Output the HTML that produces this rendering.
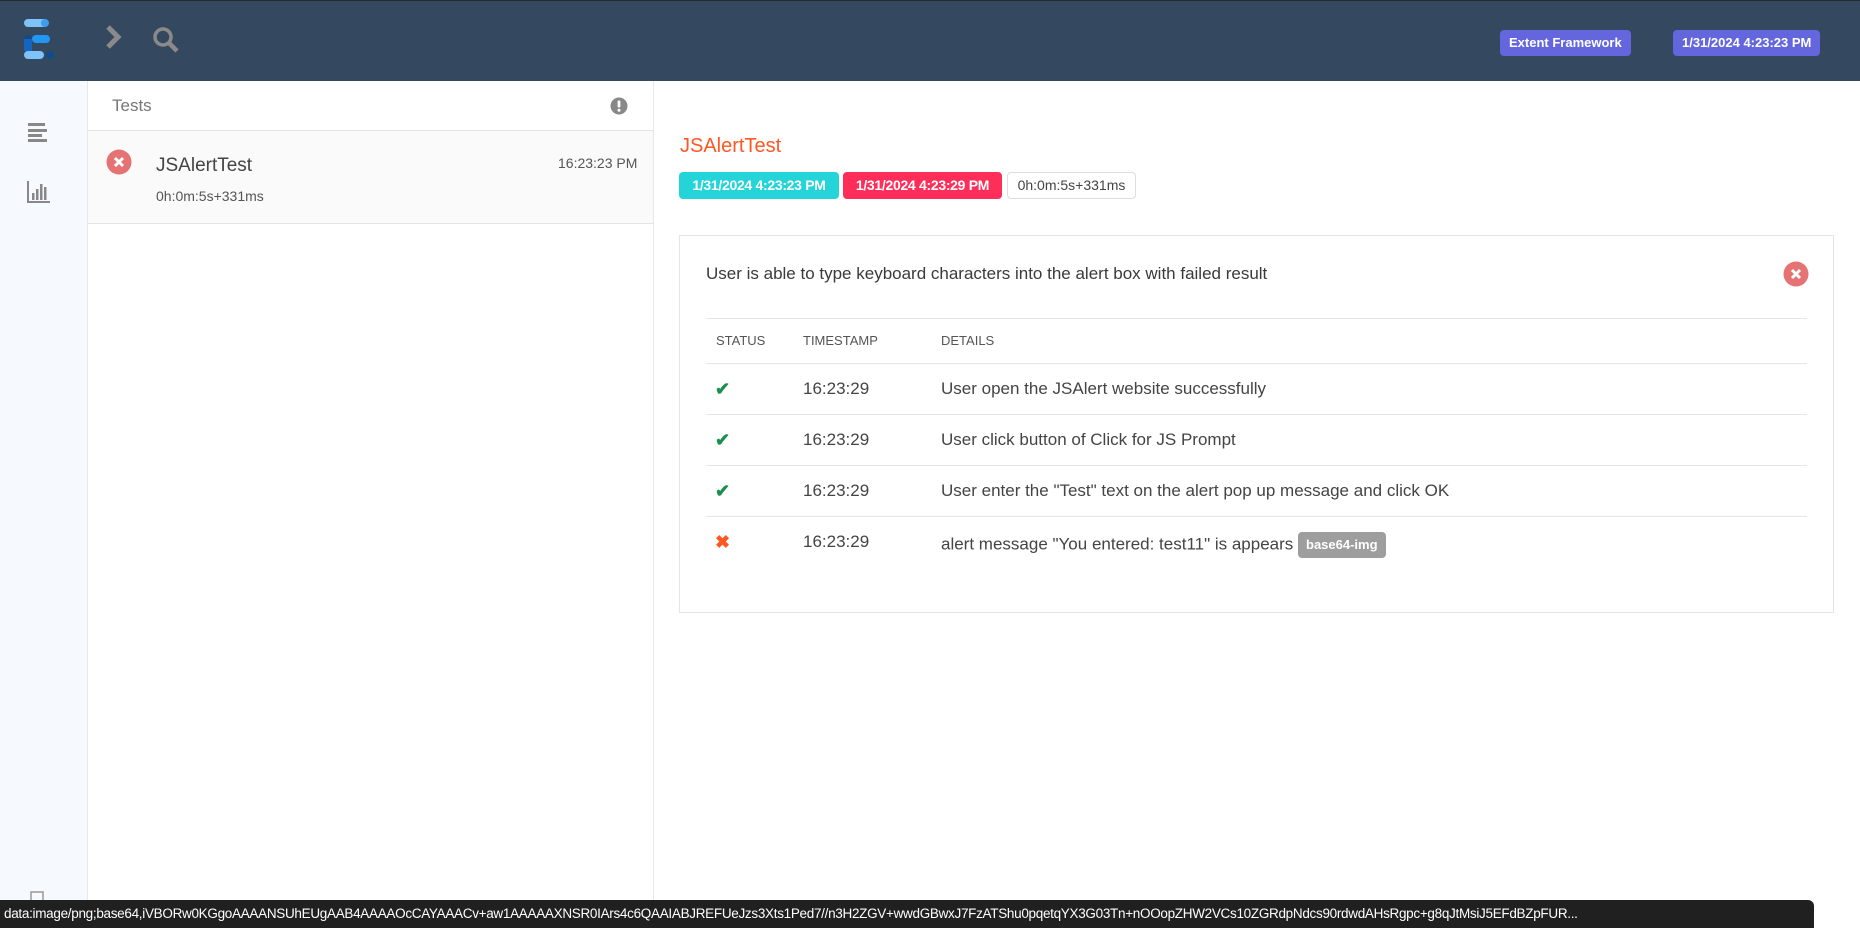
<!DOCTYPE html>
<html><head><meta charset="utf-8"><style>
*{box-sizing:border-box;margin:0;padding:0}
body{width:1860px;height:928px;overflow:hidden;font-family:"Liberation Sans",sans-serif;background:#fff;position:relative;color:#333}
.top{position:absolute;left:0;top:0;width:1860px;height:81px;background:#344960;border-top:1px solid #2a2a2a}
.hb{position:absolute;top:29px;height:26px;background:#6366dc;color:#fff;font-weight:bold;font-size:13px;line-height:26px;border-radius:4px;padding:0 9px}
.side{position:absolute;left:0;top:81px;width:88px;height:847px;background:#f6f9fe;border-right:1px solid #e6e9ee}
.list{position:absolute;left:88px;top:81px;width:566px;height:847px;border-right:1px solid #e8e8e8;background:#fff}
.abs{position:absolute}
.badge{position:absolute;top:172px;height:27px;line-height:27px;font-size:14px;font-weight:bold;color:#fff;border-radius:4px;text-align:center;letter-spacing:-0.3px}
.card{position:absolute;left:679px;top:235px;width:1155px;height:378px;border:1px solid #e4e4e4}
.hl{position:absolute;left:26px;width:1101px;height:1px;background:#e6e6e6}
.cell{position:absolute;font-size:17px;color:#444}
.h{font-size:13px;color:#555}
.ck{color:#1e8e4e;font-size:18px;font-weight:bold}
</style></head><body>
<div class="top">
  <svg class="abs" style="left:24px;top:18px" width="40" height="44" viewBox="0 0 40 44">
    <rect x="0" y="0" width="24" height="8" rx="4" fill="#7ec2f7"/><circle cx="21" cy="4" r="4" fill="#3a9df0"/>
    <circle cx="4" cy="20" r="4" fill="#0f4c8a"/><rect x="8" y="16" width="18" height="8" rx="4" fill="#2196f3"/>
    <rect x="0" y="20" width="8" height="12" fill="#1565c0"/>
    <rect x="0" y="32" width="20" height="8" rx="4" fill="#7ec2f7"/><circle cx="26" cy="36" r="4" fill="#0f4c8a"/>
  </svg>
  <svg class="abs" style="left:104px;top:23px" width="20" height="26" viewBox="0 0 20 26"><path d="M4 3 L14 13 L4 23" stroke="#8a8a8a" stroke-width="5" fill="none"/></svg>
  <svg class="abs" style="left:151px;top:24px" width="30" height="30" viewBox="0 0 30 30"><circle cx="12" cy="12" r="8" stroke="#8a8a8a" stroke-width="3.5" fill="none"/><path d="M18 18 L26 26" stroke="#8a8a8a" stroke-width="4.5"/></svg>
  <div class="hb" style="left:1500px">Extent Framework</div>
  <div class="hb" style="left:1673px">1/31/2024 4:23:23 PM</div>
</div>
<div class="side">
  <svg class="abs" style="left:28px;top:42px" width="20" height="20" viewBox="0 0 20 20"><rect x="0" y="0" width="17" height="3" fill="#888"/><rect x="0" y="6" width="19" height="3" fill="#888"/><rect x="0" y="11" width="14" height="3" fill="#888"/><rect x="0" y="16" width="19" height="3" fill="#888"/></svg>
  <svg class="abs" style="left:27px;top:100px" width="24" height="22" viewBox="0 0 24 22"><path d="M1 0 V21 H23" stroke="#888" stroke-width="2" fill="none"/><rect x="5" y="12" width="2.5" height="7" fill="#888"/><rect x="9" y="8" width="2.5" height="11" fill="#888"/><rect x="13" y="3" width="2.5" height="16" fill="#888"/><rect x="17" y="6" width="2.5" height="13" fill="#888"/></svg>
  <svg class="abs" style="left:30px;top:810px" width="20" height="12" viewBox="0 0 20 12"><rect x="1" y="1" width="12" height="11" stroke="#999" stroke-width="1.5" fill="none"/></svg>
</div>
<div class="list">
  <div class="abs" style="left:24px;top:15px;font-size:17px;color:#777">Tests</div>
  <svg class="abs" style="left:522px;top:16px" width="18" height="18" viewBox="0 0 18 18"><circle cx="9" cy="9" r="8.5" fill="#888"/><rect x="7.6" y="3.5" width="2.8" height="7" rx="1" fill="#fff"/><circle cx="9" cy="13.3" r="1.5" fill="#fff"/></svg>
  <div class="abs" style="left:0;top:49px;width:565px;height:1px;background:#e4e4e4"></div>
  <div class="abs" style="left:0;top:50px;width:565px;height:93px;background:#fafafa;border-bottom:1px solid #e4e4e4">
    <svg class="abs" style="left:18px;top:18px" width="26" height="26" viewBox="0 0 26 26"><circle cx="13" cy="13" r="12.5" fill="#e57373"/><path d="M9 9 L17 17 M17 9 L9 17" stroke="#fff" stroke-width="3"/></svg>
    <div class="abs" style="left:68px;top:24px;font-size:19px;color:#444">JSAlertTest</div>
    <div class="abs" style="left:470px;top:24px;font-size:14px;color:#555">16:23:23 PM</div>
    <div class="abs" style="left:68px;top:57px;font-size:14px;color:#555">0h:0m:5s+331ms</div>
  </div>
</div>
<div class="abs" style="left:680px;top:135px;font-size:20px;color:#ff5722">JSAlertTest</div>
<div class="badge" style="left:679px;width:160px;background:#24d4d9">1/31/2024 4:23:23 PM</div>
<div class="badge" style="left:843px;width:159px;background:#ff2d5a">1/31/2024 4:23:29 PM</div>
<div class="badge" style="left:1007px;width:129px;background:#fff;border:1px solid #ddd;color:#444;font-weight:normal;line-height:25px;letter-spacing:0">0h:0m:5s+331ms</div>
<div class="card">
  <div class="abs" style="left:26px;top:28px;font-size:17px;color:#3a3a3a">User is able to type keyboard characters into the alert box with failed result</div>
  <svg class="abs" style="left:1103px;top:25px" width="26" height="26" viewBox="0 0 26 26"><circle cx="13" cy="13" r="12.5" fill="#e57373"/><path d="M9 9 L17 17 M17 9 L9 17" stroke="#fff" stroke-width="3"/></svg>
  <div class="hl" style="top:82px"></div>
  <div class="cell h" style="left:36px;top:97px">STATUS</div>
  <div class="cell h" style="left:123px;top:97px">TIMESTAMP</div>
  <div class="cell h" style="left:261px;top:97px">DETAILS</div>
  <div class="hl" style="top:127px"></div>
  <div class="cell ck" style="left:35px;top:143px">✔</div><div class="cell" style="left:123px;top:143px">16:23:29</div><div class="cell" style="left:261px;top:143px">User open the JSAlert website successfully</div>
  <div class="hl" style="top:178px"></div>
  <div class="cell ck" style="left:35px;top:194px">✔</div><div class="cell" style="left:123px;top:194px">16:23:29</div><div class="cell" style="left:261px;top:194px">User click button of Click for JS Prompt</div>
  <div class="hl" style="top:229px"></div>
  <div class="cell ck" style="left:35px;top:245px">✔</div><div class="cell" style="left:123px;top:245px">16:23:29</div><div class="cell" style="left:261px;top:245px">User enter the "Test" text on the alert pop up message and click OK</div>
  <div class="hl" style="top:280px"></div>
  <div class="cell" style="left:35px;top:296px;color:#ff5722;font-weight:bold;font-size:18px">✖</div><div class="cell" style="left:123px;top:296px">16:23:29</div><div class="cell" style="left:261px;top:296px">alert message "You entered: test11" is appears <span style="display:inline-block;background:#9e9e9e;color:#fff;font-size:13px;font-weight:bold;padding:0 8px;height:26px;line-height:26px;border-radius:4px;vertical-align:middle">base64-img</span></div>
</div>
<div class="abs" style="left:0;top:900px;width:1814px;height:28px;background:#202020;color:#fff;font-size:13.5px;line-height:28px;padding-left:4px;white-space:nowrap;overflow:hidden;border-radius:0 6px 0 0;letter-spacing:-0.3px">data:image/png;base64,iVBORw0KGgoAAAANSUhEUgAAB4AAAAOcCAYAAACv+aw1AAAAAXNSR0IArs4c6QAAIABJREFUeJzs3Xts1Ped7//n3H2ZGV+wwdGBwxJ7FzATShu0pqetqYX3G03Tn+nOOopZHW2VCs10ZGRdpNdcs90rdwdAHsRgpc+g8qJtMsiJ5EFdBZpFUR...</div>
</body></html>
